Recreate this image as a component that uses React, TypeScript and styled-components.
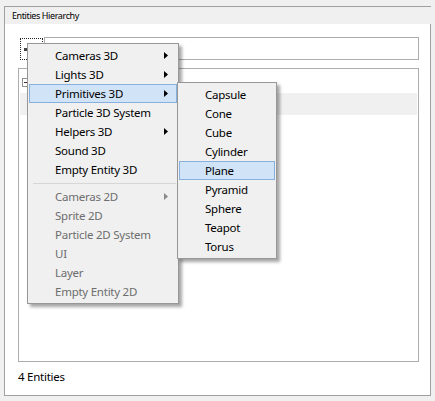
import React from "react";
import styled, { createGlobalStyle } from "styled-components";

const GlobalStyle = createGlobalStyle`
  html, body { margin: 0; padding: 0; background: #f0f0f0; }
  body {
    font-family: "Noto Sans", "Open Sans", sans-serif;
    font-size: 11.5px;
    letter-spacing: -0.25px;
    color: #000;
    width: 435px;
    height: 401px;
    overflow: hidden;
    position: relative;
  }
`;

const Frame = styled.div`
  margin: 6px 0 0 4px;
  width: 426px;
  border-top: 1px solid #a0a0a0;
  border-left: 1px solid #a0a0a0;
`;

const TitleStrip = styled.div`
  height: 17px;
  display: flex;
  align-items: center;
  padding-left: 7px;
  font-size: 9px;
  letter-spacing: -0.4px;
  color: #000;
`;

const Body = styled.div`
  background: #fff;
  border-right: 1px solid #a0a0a0;
  border-bottom: 1px solid #a0a0a0;
  display: flex;
  flex-direction: column;
  padding: 13px 0 0 12px;
  box-sizing: border-box;
  height: 372px;
`;

const SearchRow = styled.div`
  display: flex;
  height: 23px;
`;

const IconButton = styled.div`
  width: 27px;
  height: 23px;
  box-sizing: border-box;
  padding: 1px 1px 0 3px;
`;

const FocusRect = styled.div`
  width: 100%;
  height: 100%;
  box-sizing: border-box;
  border: 1px dotted #222;
  display: flex;
  align-items: center;
  padding-left: 3px;
`;

const Dot = styled.span`
  width: 3px;
  height: 3px;
  background: #444;
  display: block;
`;

const SearchInput = styled.div`
  width: 375px;
  height: 23px;
  box-sizing: border-box;
  border: 1px solid #adadad;
  background: #fff;
`;

const Tree = styled.div`
  margin: 8px 0 0 1px;
  width: 401px;
  height: 294px;
  box-sizing: border-box;
  border: 1px solid #adadad;
  padding: 2px 0 0 1px;
  display: flex;
  flex-direction: column;
`;

const TreeRow = styled.div<{ $selected?: boolean }>`
  height: 22px;
  display: flex;
  align-items: center;
  background: ${(p) => (p.$selected ? "#f0f0f0" : "transparent")};
  margin-right: 1px;
`;

const Expander = styled.span`
  width: 9px;
  height: 9px;
  margin-left: 2px;
  box-sizing: border-box;
  border: 1px solid #919191;
  display: flex;
  align-items: center;
  justify-content: center;
  &::after {
    content: "";
    width: 5px;
    height: 1px;
    background: #333;
  }
`;

const Status = styled.div`
  margin: 7px 0 0 1px;
  height: 16px;
  line-height: 16px;
`;

const Menu = styled.div<{ $left: number; $top: number; $width: number }>`
  position: absolute;
  left: ${(p) => p.$left}px;
  top: ${(p) => p.$top}px;
  width: ${(p) => p.$width}px;
  box-sizing: border-box;
  background: #f0f0f0;
  border: 1px solid #979797;
  padding: 2px 1px;
  box-shadow: 3px 3px 3px rgba(0, 0, 0, 0.35);
  display: flex;
  flex-direction: column;
`;

const Item = styled.div<{ $active?: boolean; $disabled?: boolean; $indent: number }>`
  height: 19px;
  box-sizing: border-box;
  display: flex;
  align-items: center;
  padding-left: ${(p) => p.$indent}px;
  padding-right: 8px;
  color: ${(p) => (p.$disabled ? "#6d6d6d" : "#000")};
  background: ${(p) => (p.$active ? "#d1e3f6" : "transparent")};
  border: 1px solid ${(p) => (p.$active ? "#88b0de" : "transparent")};
  white-space: nowrap;
`;

const Label = styled.span`
  flex: 1;
`;

const Separator = styled.div`
  height: 8px;
  display: flex;
  align-items: center;
  padding: 0 1px 0 4px;
  &::after {
    content: "";
    flex: 1;
    height: 1px;
    background: #d7d7d7;
  }
`;

const Arrow = ({ disabled }: { disabled?: boolean }) => (
  <svg width="4" height="7" viewBox="0 0 4 7" style={{ display: "block" }}>
    <path d="M0 0 L4 3.5 L0 7 Z" fill={disabled ? "#8a8a8a" : "#000"} />
  </svg>
);

type Entry = { label: string; sub?: boolean; disabled?: boolean; active?: boolean } | "sep";

const mainItems: Entry[] = [
  { label: "Cameras 3D", sub: true },
  { label: "Lights 3D", sub: true },
  { label: "Primitives 3D", sub: true, active: true },
  { label: "Particle 3D System" },
  { label: "Helpers 3D", sub: true },
  { label: "Sound 3D" },
  { label: "Empty Entity 3D" },
  "sep",
  { label: "Cameras 2D", sub: true, disabled: true },
  { label: "Sprite 2D", disabled: true },
  { label: "Particle 2D System", disabled: true },
  { label: "UI", disabled: true },
  { label: "Layer", disabled: true },
  { label: "Empty Entity 2D", disabled: true },
];

const subItems = ["Capsule", "Cone", "Cube", "Cylinder", "Plane", "Pyramid", "Sphere", "Teapot", "Torus"];

export default function App() {
  return (
    <>
      <GlobalStyle />
      <Frame>
        <TitleStrip>Entities Hierarchy</TitleStrip>
        <Body>
          <SearchRow>
            <IconButton>
              <FocusRect>
                <Dot />
              </FocusRect>
            </IconButton>
            <SearchInput />
          </SearchRow>
          <Tree>
            <TreeRow>
              <Expander />
            </TreeRow>
            <TreeRow $selected />
          </Tree>
          <Status>4 Entities</Status>
        </Body>
      </Frame>

      <Menu $left={27} $top={43} $width={152}>
        {mainItems.map((e, i) =>
          e === "sep" ? (
            <Separator key={i} />
          ) : (
            <Item key={i} $indent={25} $active={e.active} $disabled={e.disabled}>
              <Label>{e.label}</Label>
              {e.sub && <Arrow disabled={e.disabled} />}
            </Item>
          )
        )}
      </Menu>

      <Menu $left={177} $top={82} $width={100}>
        {subItems.map((s) => (
          <Item key={s} $indent={25} $active={s === "Plane"}>
            <Label>{s}</Label>
          </Item>
        ))}
      </Menu>
    </>
  );
}
